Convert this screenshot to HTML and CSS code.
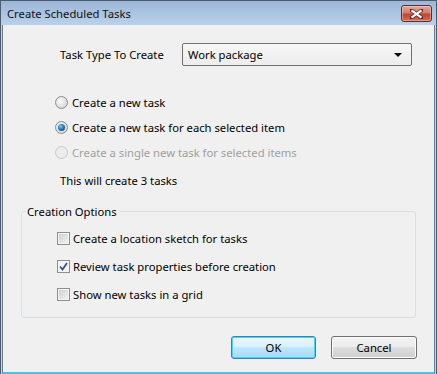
FILE: index.html
```html
<!DOCTYPE html>
<html lang="en">

<head>
    <meta charset="UTF-8">
    <title>Create Scheduled Tasks</title>
    <link rel="stylesheet" href="styles.css">
</head>

<body>
    <div class="window">
        <div class="titlebar">
            <span class="title">Create Scheduled Tasks</span>
            <button class="close-btn" aria-label="Close">
                <svg width="13" height="10" viewBox="0 0 13 10">
                    <path d="M1 1 L12 9 M12 1 L1 9" stroke="#4d2a2a" stroke-width="3.6" stroke-linecap="square" />
                    <path d="M1.5 1.3 L11.5 8.7 M11.5 1.3 L1.5 8.7" stroke="#fff" stroke-width="2.2" />
                </svg>
            </button>
        </div>

        <div class="client">
            <div class="type-row">
                <span class="type-label">Task Type To Create</span>
                <div class="combo">
                    <span>Work package</span>
                    <span class="combo-arrow"></span>
                </div>
            </div>

            <div class="radio-list">
                <label class="option">
                    <span class="radio"></span>
                    Create a new task
                </label>
                <label class="option">
                    <span class="radio checked"></span>
                    Create a new task for each selected item
                </label>
                <label class="option disabled">
                    <span class="radio"></span>
                    Create a single new task for selected items
                </label>
            </div>

            <p class="summary">This will create 3 tasks</p>

            <fieldset class="group">
                <legend>Creation Options</legend>
                <label class="option check-row">
                    <span class="checkbox"></span>
                    Create a location sketch for tasks
                </label>
                <label class="option check-row">
                    <span class="checkbox checked">
                        <svg width="9" height="9" viewBox="0 0 9 9">
                            <path d="M1 4.5 L3.5 7.5 L8 1" fill="none" stroke="#3b4f8c" stroke-width="1.8" />
                        </svg>
                    </span>
                    Review task properties before creation
                </label>
                <label class="option check-row">
                    <span class="checkbox"></span>
                    Show new tasks in a grid
                </label>
            </fieldset>

            <div class="buttons">
                <button class="btn default">OK</button>
                <button class="btn">Cancel</button>
            </div>
        </div>
    </div>
</body>

</html>
```

FILE: styles.css
```css
body {
    margin: 0;
    font-family: "Segoe UI", "Noto Sans", sans-serif;
    font-size: 11.25px;
    color: #000;
}

.window {
    width: 437px;
    height: 374px;
    box-sizing: border-box;
    border: 1px solid #4d5b6c;
    border-bottom: none;
    background: #bcd3ea;
    display: flex;
    flex-direction: column;
}

.titlebar {
    height: 24px;
    flex: none;
    display: flex;
    align-items: center;
    justify-content: space-between;
    padding: 0 4px 0 6px;
    background: linear-gradient(#9db6d7 0%, #a9c2df 45%, #bad1ea 100%);
}

.title {
    color: #111;
    padding-top: 1px;
}

.close-btn {
    width: 31px;
    height: 17px;
    margin-top: 1px;
    padding: 0;
    border: 1px solid #5b2e2e;
    border-radius: 3px;
    background: linear-gradient(#e5a89c 0%, #d57b6a 45%, #c4452f 55%, #d36b55 100%);
    box-shadow: inset 0 0 0 1px rgba(255, 255, 255, 0.35);
    display: flex;
    align-items: center;
    justify-content: center;
}

.client {
    flex: 1;
    margin: 0 1px;
    border-left: 1px solid #6d7d90;
    border-right: 1px solid #6d7d90;
    border-bottom: 2px solid #3ec6e9;
    background: #f0f0f0;
    box-shadow: 0 2px 0 #1b3f5c;
}

.type-row {
    display: flex;
    align-items: center;
    margin: 18px 0 0 57px;
}

.type-label {
    width: 122px;
}

.combo {
    width: 223px;
    height: 21px;
    border: 1px solid #707070;
    border-radius: 2px;
    background: linear-gradient(#f7f7f7, #ececec);
    display: flex;
    align-items: center;
    justify-content: space-between;
    padding-left: 5px;
}

.combo-arrow {
    width: 0;
    height: 0;
    margin-right: 9px;
    border-left: 4px solid transparent;
    border-right: 4px solid transparent;
    border-top: 4px solid #000;
}

.radio-list {
    margin: 24px 0 0 52px;
}

.option {
    display: flex;
    align-items: center;
    height: 25px;
    gap: 4px;
}

.option.disabled {
    color: #a0a0a0;
}

.radio {
    width: 11px;
    height: 11px;
    border: 1px solid #8e8f8f;
    border-radius: 50%;
    background: radial-gradient(circle at 40% 40%, #fdfdfd, #d8d8d8 70%, #c7c7c7);
    position: relative;
}

.radio.checked::after {
    content: "";
    position: absolute;
    left: 2px;
    top: 2px;
    width: 7px;
    height: 7px;
    border-radius: 50%;
    background: radial-gradient(circle at 40% 35%, #7ecaf2, #1a6ba8 55%, #0b3f6f);
}

.disabled .radio {
    border-color: #c9c9c9;
    background: #ececec;
}

.summary {
    margin: 6px 0 0 57px;
    height: 20px;
    line-height: 20px;
}

.group {
    margin: 13px 0 0 18px;
    width: 395px;
    height: 114px;
    box-sizing: border-box;
    border: 1px solid #d5dfe5;
    border-radius: 3px;
    padding: 5px 0 0 0;
}

.group legend {
    padding: 0 2px;
    margin-left: 3px;
}

.check-row {
    height: 28px;
    margin-left: 35px;
    gap: 3px;
}

.checkbox {
    width: 11px;
    height: 11px;
    border: 1px solid #8e8f8f;
    background: linear-gradient(135deg, #cbcbcb, #f6f6f6);
    box-shadow: inset 0 0 0 1px #f4f4f4;
    display: flex;
    align-items: center;
    justify-content: center;
}

.checkbox.checked {
    background: #f4f4f4;
}

.buttons {
    display: flex;
    justify-content: flex-end;
    gap: 15px;
    margin: 18px 17px 0 0;
}

.btn {
    width: 86px;
    height: 23px;
    font-family: inherit;
    font-size: 11.25px;
    border: 1px solid #707070;
    border-radius: 3px;
    background: linear-gradient(#f2f2f2 0%, #ebebeb 50%, #dddddd 50%, #cfcfcf 100%);
    box-shadow: inset 0 0 0 1px #fcfcfc;
}

.btn.default {
    width: 85px;
    border-color: #3c7fb1;
    background: linear-gradient(#eaf6fd 0%, #d9f0fc 50%, #bee6fd 50%, #a7d9f5 100%);
    box-shadow: inset 0 0 0 1px #48d3fa;
}
```
